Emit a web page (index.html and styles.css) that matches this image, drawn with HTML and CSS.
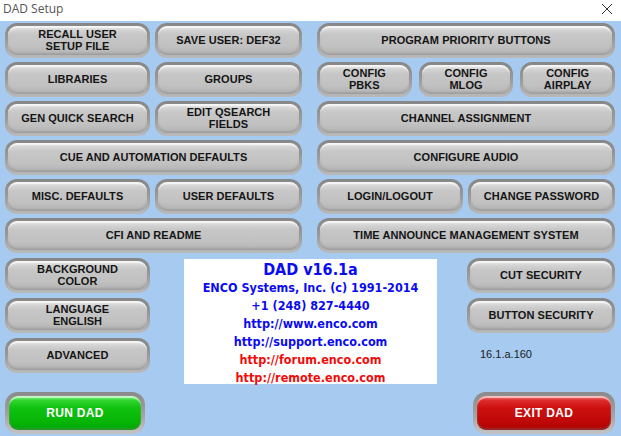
FILE: index.html
```html
<!DOCTYPE html>
<html>
<head>
<meta charset="utf-8">
<link rel="stylesheet" href="styles.css">
</head>
<body>
<div class="window">
  <div class="titlebar">
    <span class="title">DAD Setup</span>
    <svg class="close" width="12" height="12" viewBox="0 0 12 12"><path d="M1 1 L11 11 M11 1 L1 11" stroke="#333" stroke-width="1" fill="none"/></svg>
  </div>
  <div class="client">
    <div class="top">
      <div class="col left">
        <div class="row two">
          <div class="btn">RECALL USER<br>SETUP FILE</div>
          <div class="btn">SAVE USER: DEF32</div>
        </div>
        <div class="row two">
          <div class="btn">LIBRARIES</div>
          <div class="btn">GROUPS</div>
        </div>
        <div class="row two">
          <div class="btn">GEN QUICK SEARCH</div>
          <div class="btn">EDIT QSEARCH<br>FIELDS</div>
        </div>
        <div class="row">
          <div class="btn">CUE AND AUTOMATION DEFAULTS</div>
        </div>
        <div class="row two">
          <div class="btn">MISC. DEFAULTS</div>
          <div class="btn">USER DEFAULTS</div>
        </div>
        <div class="row">
          <div class="btn">CFI AND README</div>
        </div>
      </div>
      <div class="col right">
        <div class="row">
          <div class="btn">PROGRAM PRIORITY BUTTONS</div>
        </div>
        <div class="row three">
          <div class="btn">CONFIG<br>PBKS</div>
          <div class="btn">CONFIG<br>MLOG</div>
          <div class="btn">CONFIG<br>AIRPLAY</div>
        </div>
        <div class="row">
          <div class="btn">CHANNEL ASSIGNMENT</div>
        </div>
        <div class="row">
          <div class="btn">CONFIGURE AUDIO</div>
        </div>
        <div class="row two wide">
          <div class="btn">LOGIN/LOGOUT</div>
          <div class="btn">CHANGE PASSWORD</div>
        </div>
        <div class="row">
          <div class="btn">TIME ANNOUNCE MANAGEMENT SYSTEM</div>
        </div>
      </div>
    </div>
    <div class="middle">
      <div class="stack lstack">
        <div class="btn">BACKGROUND<br>COLOR</div>
        <div class="btn">LANGUAGE<br>ENGLISH</div>
        <div class="btn">ADVANCED</div>
      </div>
      <div class="info">
        <div class="big blue">DAD v16.1a</div>
        <div class="blue">ENCO Systems, Inc. (c) 1991-2014</div>
        <div class="blue">+1 (248) 827-4440</div>
        <div class="blue">http://www.enco.com</div>
        <div class="blue">http://support.enco.com</div>
        <div class="red">http://forum.enco.com</div>
        <div class="red">http://remote.enco.com</div>
      </div>
      <div class="stack rstack">
        <div class="btn">CUT SECURITY</div>
        <div class="btn">BUTTON SECURITY</div>
        <div class="version">16.1.a.160</div>
      </div>
    </div>
    <div class="bottom">
      <div class="btn big-btn green">RUN DAD</div>
      <div class="btn big-btn red-btn">EXIT DAD</div>
    </div>
  </div>
</div>
</body>
</html>
```

FILE: styles.css
```css
html, body {
  margin: 0;
  padding: 0;
}
body {
  width: 621px;
  height: 436px;
  overflow: hidden;
  background: #a6caf0;
  font-family: "Liberation Sans", Arial, sans-serif;
}
.window {
  width: 621px;
  height: 436px;
  display: flex;
  flex-direction: column;
}
.titlebar {
  flex: 0 0 21px;
  height: 21px;
  background: #ffffff;
  display: flex;
  align-items: center;
  justify-content: space-between;
  padding: 0 4px 0 3px;
  box-sizing: border-box;
}
.title {
  font-family: "Open Sans", "Noto Sans", sans-serif;
  font-size: 12px;
  color: #555;
  position: relative;
  top: -2px;
}
.close {
  margin-right: 4px;
  position: relative;
  top: -2px;
}
.client {
  flex: 1;
  padding: 2px 6px 0 5px;
  display: flex;
  flex-direction: column;
}
.top {
  display: flex;
  gap: 15px;
  flex-shrink: 0;
}
.col {
  display: flex;
  flex-direction: column;
  gap: 4px;
}
.col.left { width: 297px; }
.col.right { width: 298px; }
.row {
  display: flex;
  height: 35px;
}
.row > .btn { flex: 1; }
.row.two { gap: 5px; }
.row.two > .btn:first-child { flex: 0 0 145px; }
.row.two.wide > .btn:first-child { flex: 0 0 146px; }
.row.three { gap: 7px; }

.btn {
  box-sizing: border-box;
  display: flex;
  align-items: center;
  justify-content: center;
  text-align: center;
  font-weight: bold;
  font-size: 11px;
  line-height: 12px;
  letter-spacing: 0.05px;
  color: #151515;
  border: 3px solid transparent;
  border-radius: 12px;
  background:
    linear-gradient(180deg, #eeeeee 0%, #d4d4d4 14%, #c7c7c7 30%, #c1c1c1 70%, #b3b3b3 100%) padding-box,
    linear-gradient(180deg, #868686 0%, #9a9a9a 50%, #bababa 100%) border-box;
  box-shadow: inset 0 -2px 2px rgba(120,120,120,0.35), inset 0 2px 1px rgba(255,255,255,0.6);
  padding-bottom: 1px;
}

.middle {
  display: flex;
  margin-top: 5px;
  align-items: flex-start;
  flex-shrink: 0;
}
.stack {
  display: flex;
  flex-direction: column;
  gap: 5px;
}
.stack > .btn { height: 35px; }
.lstack { width: 145px; }
.rstack { width: 148px; margin-left: 30px; }
.info {
  margin-left: 34px;
  margin-top: 1px;
  width: 253px;
  height: 125px;
  background: #ffffff;
  display: flex;
  flex-direction: column;
  align-items: center;
  font-family: "DejaVu Sans Condensed", "DejaVu Sans", sans-serif;
  font-weight: bold;
  font-size: 12.5px;
  line-height: 18px;
  padding-top: 1px;
  box-sizing: border-box;
}
.info .big {
  font-size: 16px;
  line-height: 19px;
}
.blue { color: #0a0af5; }
.red { color: #f20a0a; }
.version {
  font-family: "Liberation Sans", Arial, sans-serif;
  font-size: 11px;
  color: #1a1a1a;
  margin-top: 10px;
  padding-left: 13px;
}
.bottom {
  display: flex;
  justify-content: space-between;
  margin-top: 8px;
  flex-shrink: 0;
}
.big-btn {
  flex-shrink: 0;
  height: 42px;
  border-width: 4px;
  font-size: 12px;
  letter-spacing: 0.3px;
  color: #ffffff;
  border-radius: 13px;
}
.green {
  width: 140px;
  background:
    linear-gradient(180deg, #7cf07c 0%, #2fd42f 14%, #10c210 35%, #07b507 75%, #00a800 100%) padding-box,
    linear-gradient(180deg, #8a8a8a 0%, #a0a0a0 50%, #c4c4c4 100%) border-box;
}
.red-btn {
  width: 142px;
  background:
    linear-gradient(180deg, #f07070 0%, #de2a2a 14%, #cc1010 35%, #c00808 75%, #aa0000 100%) padding-box,
    linear-gradient(180deg, #8a8a8a 0%, #a0a0a0 50%, #c4c4c4 100%) border-box;
}
```
